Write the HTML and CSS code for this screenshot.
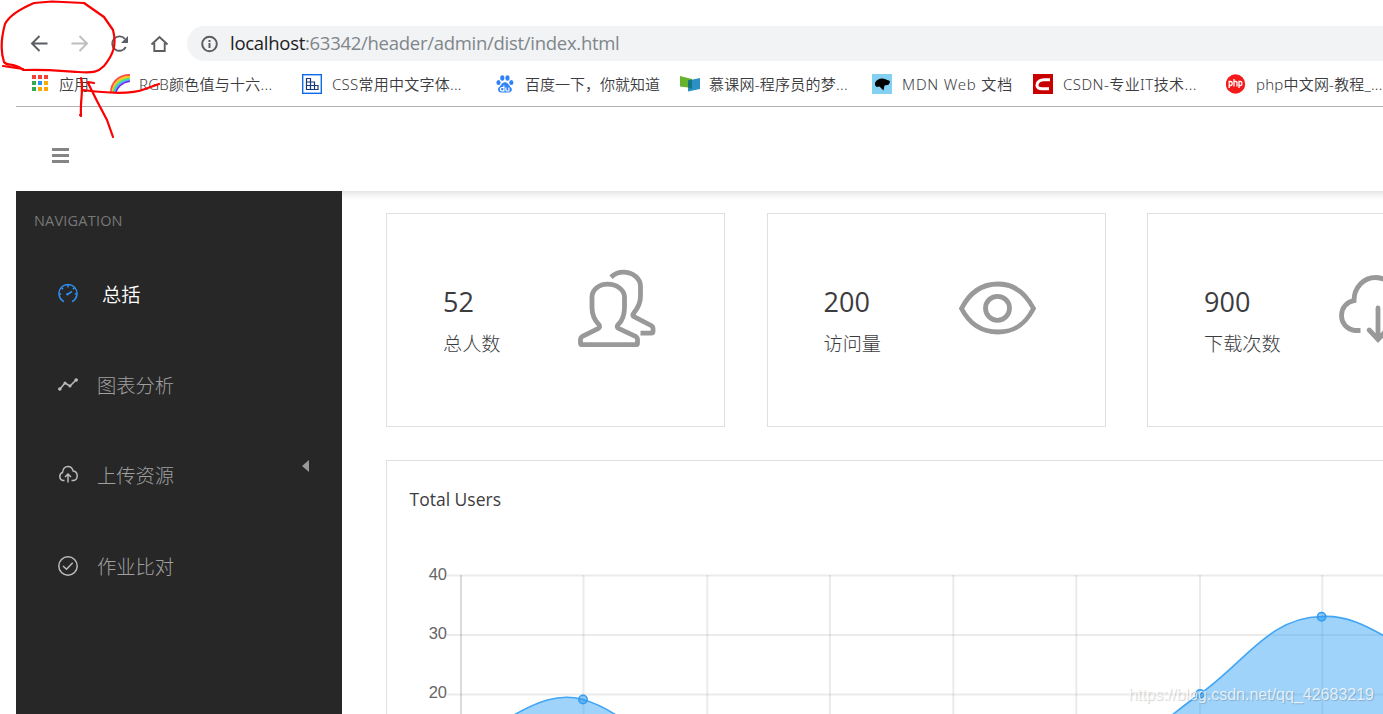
FILE: index.html
```html
<!DOCTYPE html>
<html lang="zh-CN">
<head>
  <meta charset="UTF-8">
  <meta name="viewport" content="width=device-width, initial-scale=1.0">
  <title>Admin</title>
  <link rel="stylesheet" href="styles.css">
</head>
<body>
  <!-- Browser toolbar -->
  <div class="toolbar">
    <svg class="tool-icon" viewBox="0 0 20 20"><path d="M18.500 9.500H3.500M10.500 2L3 9.500l7.500 7.500"/></svg>
    <svg class="tool-icon disabled" viewBox="0 0 20 20"><path d="M2.500 9.500h15M10.500 2l7.500 7.500-7.500 7.500"/></svg>
    <svg class="tool-icon" viewBox="0 0 20 20"><path d="M16.800 13a7.200 7.200 0 1 1-.8-8"/><path class="solid" d="M19 2v7h-7z"/></svg>
    <svg class="tool-icon" viewBox="0 0 20 20"><path d="M2.500 10.500l8-7.500 8 7.500M5.300 9v8h10.400V9"/></svg>
    <div class="address">
      <svg class="info" viewBox="0 0 18 18"><circle cx="9.500" cy="9" r="7.300"/><path d="M9.500 8v5M9.500 5v2"/></svg>
      <span class="url"><b>localhost</b>:63342/header/admin/dist/index.html</span>
    </div>
  </div>

  <!-- Bookmarks bar -->
  <div class="bookmarks">
    <div class="bookmark apps">
      <svg viewBox="0 0 20 20">
        <path fill="#f44336" d="M2 1h4v4H2zM8 1h4v4H8zM14 1h4v4h-4z"/>
        <path fill="#34a853" d="M2 7h4v4H2zM2 13h4v4H2z"/>
        <path fill="#2196f3" d="M8 7h4v4H8z"/>
        <path fill="#fba900" d="M14 7h4v4h-4zM8 13h4v4H8zM14 13h4v4h-4z"/>
      </svg>
      <span>应用</span>
    </div>
    <div class="bookmark rgb">
      <svg viewBox="0 0 20 20" fill="none" stroke-width="2">
        <path stroke="#ff4b3e" d="M1 19C1 9 8 1 20 1"/>
        <path stroke="#ffc21c" d="M2.500 19C3 10 9 3 20 2.800"/>
        <path stroke="#5ee65a" d="M3.500 19C4 11.500 10 5 20 4.500"/>
        <path stroke="#49b6f5" d="M4.500 19C6 12.500 11 7 20 6"/>
        <path stroke="#7a22ee" stroke-width="1.500" d="M5.500 19C7 13.500 12 8 20 7.200"/>
      </svg>
      <span>RGB颜色值与十六...</span>
    </div>
    <div class="bookmark css">
      <svg viewBox="0 0 20 20">
        <rect x=".7" y=".7" width="18.600" height="18.600" fill="#fff" stroke="#0b6cf0" stroke-width="1.400"/>
        <path fill="none" stroke="#173a78" stroke-width="1.200" d="M4.500 4.500h4v11h-4zM4.500 8h4M4.500 11.500h11.500v4H4.500M8.500 8h4v7.500"/>
      </svg>
      <span>CSS常用中文字体...</span>
    </div>
    <div class="bookmark baidu">
      <svg viewBox="0 0 20 20" fill="#2f82f7">
        <ellipse cx="3.500" cy="8.500" rx="2.100" ry="2.600"/><ellipse cx="7.300" cy="4" rx="2.100" ry="2.800"/><ellipse cx="12.500" cy="4" rx="2.100" ry="2.800"/><ellipse cx="16.300" cy="8.500" rx="2.100" ry="2.600"/>
        <path d="M9.900 8.300c-3 0-3.500 3-5.700 4.700C2 14.800 3 18.600 6.500 18.500h7c3.500 0 4.500-3.500 2-5.600C13.700 11.300 12.900 8.300 9.900 8.300z"/>
        <path fill="none" stroke="#fff" stroke-width="1.200" d="M8.900 11.500v5.300h-2c-2 0-2-3.300 0-3.300h2M10.900 13.500v2.500q0 1 1 1h2v-3.500"/>
      </svg>
      <span>百度一下，你就知道</span>
    </div>
    <div class="bookmark mooc">
      <svg viewBox="0 0 20 20"><path fill="#67b32e" d="M0 2l12 3v9L0 12.500z"/><path fill="#2b91c4" d="M8 6.500L20 4v11L8 17.500z"/><path fill="#167582" d="M8 6.500l4-1v9.500l-4-1.200z"/></svg>
      <span>慕课网-程序员的梦...</span>
    </div>
    <div class="bookmark mdn">
      <svg viewBox="0 0 20 20"><path fill="#83d0f2" d="M0 0h20v20H0z"/><path d="M3 9c1-3 4-4.500 7-4.500 3 0 4 1.200 7.500 2.200l.5 1.600-1.500 2.500-4 .7-1 5-4-4-3 .5L3 11z"/></svg>
      <span>MDN Web 文档</span>
    </div>
    <div class="bookmark csdn">
      <svg viewBox="0 0 20 20"><path fill="#c90000" d="M0 0h20v20H0z"/><path fill="none" stroke="#fff" stroke-width="3" d="M17 5.800h-4.500C7 5.300 4.200 8 4 11c-.2 2.500 1.500 3.700 5 3.700h7"/></svg>
      <span>CSDN-专业IT技术...</span>
    </div>
    <div class="bookmark php">
      <svg viewBox="0 0 20 20"><circle cx="9.500" cy="10" r="9.700" fill="#f51a1a"/><path fill="none" stroke="#fff" stroke-width="1.300" d="M3.200 14V7.500h1.500q1.500 0 1.500 2t-1.500 2H3.200M8 5v7.500M8 7.500h2q1 0 1 1v4M13 14V7.500h1.500q1.500 0 1.500 2t-1.500 2H13"/></svg>
      <span>php中文网-教程_...</span>
    </div>
  </div>

  <!-- Page header -->
  <header class="header">
    <div class="menu"><i></i><i></i><i></i></div>
  </header>

  <div class="page">
    <!-- Sidebar -->
    <nav class="sidebar">
      <h2>NAVIGATION</h2>
      <ul>
        <li class="active">
          <svg viewBox="0 0 20 20"><path d="M6 17.600a9 9 0 1 1 8 0M10 1v2.500M1 10h2.200M16.800 10H19M3.600 3.800l1.500 1.500M16.400 3.800l-1.500 1.500M10 10l4-2.500"/><circle class="dot" cx="9.500" cy="10.200" r="1.300"/></svg>
          <span>总括</span>
        </li>
        <li>
          <svg viewBox="0 0 20 20"><path d="M2 14l5-6 5 3 6-6"/><circle class="dot" cx="1.800" cy="14" r="1.800"/><circle class="dot" cx="7" cy="8" r="1.500"/><circle class="dot" cx="12" cy="11" r="1.500"/><circle class="dot" cx="18.200" cy="5" r="1.800"/></svg>
          <span>图表分析</span>
        </li>
        <li>
          <svg viewBox="0 0 20 20"><path d="M6.500 15.500H5a4.200 4.200 0 0 1-.5-8C5 3.500 7.500 1.500 10 1.500s4.500 2 5.200 4.600C18 6.500 19.200 8.500 19.200 11c0 2.500-1.700 4.500-4.200 4.500h-1.500M10 17.500v-8M7 12l3-3 3 3"/></svg>
          <span>上传资源</span>
          <i class="caret"></i>
        </li>
        <li>
          <svg viewBox="0 0 20 20"><circle cx="10" cy="10" r="9.200"/><path d="M5 10l3.500 3.300 6.200-6.600"/></svg>
          <span>作业比对</span>
        </li>
      </ul>
    </nav>

    <main class="content">
      <!-- Counters -->
      <div class="cards">
        <div class="card">
          <div class="count"><strong>52</strong><span>总人数</span></div>
          <svg viewBox="0 0 80 80"><path d="M31 15.500c-8.500 0-15.500 5.500-15.500 13v10c0 8 3 13.500 7 17.500 1.200 1.500.8 3-1 4L5.500 68Q4 69 4 70.500v4q0 1.500 2 1.500h53q2 0 2-1.500v-4q0-1.500-1.500-2.500l-17-8c-2-1-2.500-2.500-1-4 4.500-4 6.500-9.500 6.500-17.500v-10c0-7.500-8-13-17-13z" transform="translate(-.5 -.3)"/><path stroke-linecap="butt" d="M34.500 8.500C38 5 42.500 3.500 47 3.500c9.500 0 17 6.500 17 14v10c0 8-3.500 13-7 17.200-1.200 1.300-.8 2.500.5 3.300L75 57q1.500 1 1.500 2.500V62.500q0 2-2 2H64" transform="translate(-.5 -.3)"/></svg>
        </div>
        <div class="card">
          <div class="count"><strong>200</strong><span>访问量</span></div>
          <svg viewBox="0 0 80 80"><path d="M3.500 39.500C12 23 24 15 40 15S67 23 75.500 39.500C67 56 56 63 40 63S12 56 3.500 39.500z"/><circle cx="39.500" cy="39.300" r="12"/></svg>
        </div>
        <div class="card">
          <div class="count"><strong>900</strong><span>下载次数</span></div>
          <svg viewBox="0 0 80 80"><path stroke-linecap="butt" d="M22.500 61.500H17C8.500 60.500 3.500 54 3.500 46.500 3.500 39 8.500 33 16 31.700 16 18 26 8.500 37.500 8.500S59 18 60 30c11 0 17.500 7 17.500 16S71 61.500 62 61.500h-5"/><path d="M40 39V70M31.200 61l8.800 9.500 8.800-9.500"/></svg>
        </div>
      </div>

      <!-- Users chart -->
      <section class="chart-card">
        <h3>Total Users</h3>
        <svg class="chart" viewBox="387 540 996 174">
          <g class="grid">
            <path d="M447 575.500H1383M447 635H1383M447 694.500H1383"/>
            <path d="M583.500 575V714M707.300 575V714M830 575V714M953.300 575V714M1076.300 575V714M1200 575V714M1322.300 575V714"/>
            <path class="axis" d="M461 575V714"/>
          </g>
          <g class="ticks"><text x="447" y="580">40</text><text x="447" y="639">30</text><text x="447" y="698">20</text></g>
          <path class="area" d="M502 722C538 700 560 693 583 699.500C602 705 618 716 626 722z"/>
          <path class="area" d="M1164 722Q1180 708 1200 694C1245 662 1270 617 1321.500 616.500C1346 615 1366 625 1393 641V722z"/>
          <circle class="point" cx="583" cy="699.500" r="4.200"/>
          <circle class="point" cx="1200" cy="694" r="4.200"/>
          <circle class="point" cx="1321.600" cy="616.700" r="4.200"/>
        </svg>
      </section>
    </main>
  </div>

  <!-- Red pen marks -->
  <svg class="pen" viewBox="0 0 180 145">
    <path d="M3 66l20 3M22 69C12 62 8 67 4 62C0 50 2 35 5 24C9 16 20 9 34 3L52 1.500L84 3L104 17L113 30C117 45 113 55 104 66C98 72 94 73 78 72C60 71 50 69 23 70"/>
    <path d="M81 78C84 90 80 98 81 116L80 115M88 82L94 83M88 83L97 101L107 120L113 137M83 90C105 93 130 95 145 89L159 84"/>
  </svg>
  <div class="watermark">https://blog.csdn.net/qq_42683219</div>
</body>
</html>
```

FILE: styles.css
```css
* {
  box-sizing: border-box;
}

body {
  display: flex;
  flex-direction: column;
  position: relative;
  height: 714px;
  margin: 0;
  overflow: hidden;
  background: #fff;
  color: #3c3c3f;
  font-family: "Open Sans", "Noto Sans CJK SC", sans-serif;
  font-weight: 300;
}

svg {
  flex: none;
}

/* Browser toolbar */
.toolbar {
  display: flex;
  align-items: center;
  gap: 20px;
  height: 61px;
  padding: 26px 0 0 29px;
}

.tool-icon {
  width: 20px;
  height: 20px;
  fill: none;
  stroke: #5a5d61;
  stroke-width: 1.900;
}

.tool-icon .solid {
  fill: #5a5d61;
  stroke: none;
}

.disabled {
  stroke: #bcbec0;
}

.address {
  display: flex;
  flex: 1;
  align-items: center;
  gap: 12px;
  height: 35px;
  margin-left: -2px;
  padding-left: 13px;
  border-radius: 18px 0 0 18px;
  background: #f1f3f4;
}

.info {
  width: 18px;
  height: 18px;
  fill: none;
  stroke: #5a5d61;
  stroke-width: 2;
}

.url {
  padding-bottom: 2px;
  color: #80868b;
  font-size: 18.500px;
  font-weight: 400;
  letter-spacing: -0.280px;
  white-space: nowrap;
}

.url b {
  color: #202124;
  font-weight: 400;
}

/* Bookmarks bar */
.bookmarks {
  display: flex;
  align-items: center;
  height: 46px;
  margin-left: 16px;
  padding-left: 14px;
  overflow: hidden;
  border-bottom: 1px solid #b3b3b3;
}

.bookmark {
  display: flex;
  flex: none;
  align-items: center;
  gap: 9px;
  font-family: "Noto Sans", "Noto Sans CJK SC", sans-serif;
  font-size: 15px;
  font-weight: 350;
  white-space: nowrap;
}

.bookmark svg {
  width: 20px;
  height: 20px;
}

.apps { width: 80px; }
.rgb { width: 192px; letter-spacing: 0.25px; }
.css { width: 193px; gap: 10px; letter-spacing: 0.25px; }
.baidu { width: 185px; gap: 10px; }
.mooc { width: 192px; letter-spacing: 0.25px; }
.mdn { width: 161px; gap: 10px; letter-spacing: 0.8px; }
.csdn { width: 193px; gap: 10px; letter-spacing: 0.45px; }
.php { gap: 10px; letter-spacing: 0.2px; }

/* Page header */
.header {
  z-index: 1;
  height: 84px;
  margin: 0 -16px 0 16px;
  padding: 41px 36px;
  box-shadow: 0 2px 8px rgba(0, 0, 0, 0.15);
  clip-path: inset(0 0 -12px 0);
}

.menu {
  display: flex;
  flex-direction: column;
  gap: 3px;
  width: 17px;
}

.menu i {
  height: 3px;
  background: #858585;
}

.page {
  display: flex;
  flex: 1;
  min-height: 0;
  padding-left: 16px;
  overflow: hidden;
}

/* Sidebar */
.sidebar {
  position: relative;
  z-index: 2;
  flex: none;
  width: 326px;
  background: #272727;
}

.sidebar h2 {
  margin: 0;
  padding: 19px 18px 0;
  color: #777;
  font-size: 14.500px;
  font-weight: 400;
  letter-spacing: 0.200px;
  line-height: 22px;
}

.sidebar ul {
  margin: 17px 0 0;
  padding: 0;
  list-style: none;
}

.sidebar li {
  display: flex;
  align-items: center;
  gap: 19px;
  height: 90.500px;
  padding: 0 33px 0 42px;
  color: #a0a0a0;
  font-size: 19.300px;
}

.sidebar li svg {
  width: 20px;
  height: 20px;
  fill: none;
  stroke: #bbb;
  stroke-width: 1.500;
}

.sidebar li .dot {
  fill: #bbb;
  stroke: none;
}

.sidebar .active {
  gap: 24px;
  color: #fff;
  font-weight: 350;
}

.sidebar .active svg {
  stroke: #2c8ef0;
}

.sidebar .active .dot {
  fill: #2c8ef0;
}

.caret {
  margin: 0 0 19px auto;
  border: 6px solid transparent;
  border-right: 7px solid #999;
  border-left: 0;
}

/* Main content */
.content {
  flex: none;
  width: 1041px;
  padding: 22px 0 0 44px;
}

.cards {
  display: flex;
  gap: 41.500px;
}

.card {
  display: flex;
  flex: none;
  align-items: center;
  justify-content: space-between;
  width: 339px;
  height: 214px;
  padding: 0 67px 23px 56px;
  border: 1px solid #dedfe5;
}

.card svg {
  width: 80px;
  height: 80px;
  fill: none;
  stroke: #999;
  stroke-width: 4.800;
  stroke-linecap: round;
}

.count {
  display: flex;
  flex-direction: column;
  padding-top: 32px;
}

.count strong {
  font-size: 27px;
  font-weight: 400;
  line-height: 38px;
}

.count span {
  font-size: 19.200px;
  line-height: 45px;
}

.chart-card {
  height: 254px;
  margin-top: 33px;
  border: 1px solid #dedfe5;
  border-width: 1px 0 0 1px;
}

.chart-card h3 {
  height: 79px;
  margin: 0;
  padding: 25px 22.500px 0;
  font-size: 17.500px;
  font-weight: 400;
  line-height: 26px;
}

.chart {
  display: block;
  width: 996px;
  height: 174px;
}

.grid {
  fill: none;
  stroke: rgba(0, 0, 0, 0.08);
  stroke-width: 2;
}

.grid .axis {
  stroke: rgba(0, 0, 0, 0.14);
}

.ticks {
  fill: #666;
  font: 16.500px "Liberation Sans", sans-serif;
  text-anchor: end;
}

.area {
  fill: rgba(54, 162, 245, 0.47);
  stroke: #42a5f5;
  stroke-width: 1.600;
}

.point {
  fill: rgba(33, 150, 243, 0.5);
  stroke: #349cf0;
  stroke-width: 1.500;
}

/* Overlays */
.pen {
  position: absolute;
  top: 0;
  left: 0;
  z-index: 3;
  width: 180px;
  height: 145px;
  fill: none;
  stroke: #fb0000;
  stroke-width: 2.200;
  stroke-linecap: round;
  stroke-linejoin: round;
}

.watermark {
  position: absolute;
  right: 9px;
  bottom: 9px;
  z-index: 3;
  color: rgba(255, 255, 255, 0.75);
  font: 16px/20px "Liberation Sans", sans-serif;
  text-shadow: 1px 1px 1px rgba(0, 0, 0, 0.18);
}
```
